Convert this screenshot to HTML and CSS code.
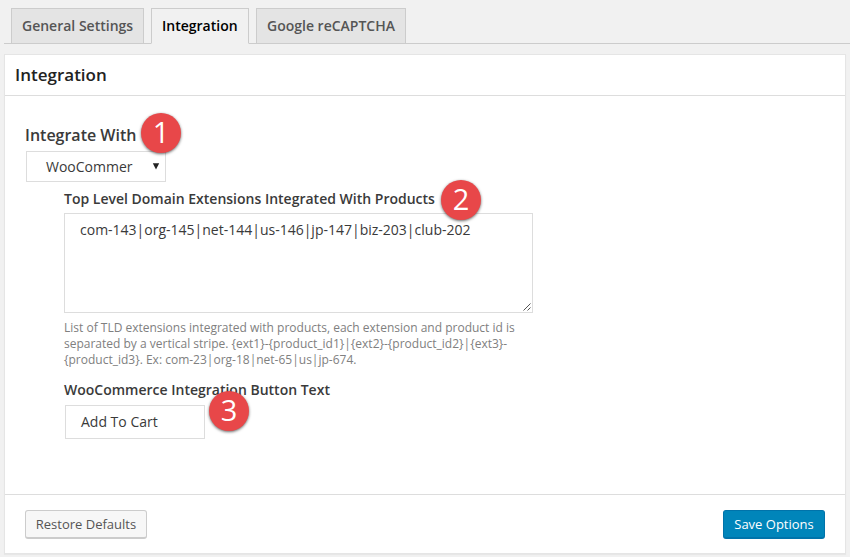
FILE: index.html
```html
<!DOCTYPE html>
<html lang="en">
<head>
<meta charset="utf-8">
<title>Integration</title>
<link rel="stylesheet" href="styles.css">
</head>
<body>
<nav class="tabs">
  <a class="tab t1"><span>General Settings</span></a>
  <a class="tab t2 active"><span>Integration</span></a>
  <a class="tab t3"><span>Google reCAPTCHA</span></a>
</nav>
<main class="panel">
  <h2 class="panel-title">Integration</h2>
  <div class="content">
    <label class="label-main">Integrate With<b class="badge b1">1</b></label>
    <div class="select"><span>WooCommer</span><svg width="8" height="7" viewBox="0 0 8 7"><path d="M.8.3h6.4L4 6.5z" fill="#222"/></svg></div>
    <div class="nested">
      <label class="label">Top Level Domain Extensions Integrated With Products<b class="badge b2">2</b></label>
      <div class="textarea">com-143|org-145|net-144|us-146|jp-147|biz-203|club-202<svg class="grip" width="8" height="8" viewBox="0 0 8 8"><path d="M.5 7.5l7-7M4.5 7.5l3-3" stroke="#555" fill="none"/></svg></div>
      <p class="help">List of TLD extensions integrated with products, each extension and product id is<br>separated by a vertical stripe. {ext1}-{product_id1}|{ext2}-{product_id2}|{ext3}-<br>{product_id3}. Ex: com-23|org-18|net-65|us|jp-674.</p>
      <label class="label label-button">WooCommerce Integration Button Text<b class="badge b3">3</b></label>
      <div class="input">Add To Cart</div>
    </div>
  </div>
  <footer class="footer">
    <button class="btn">Restore Defaults</button>
    <button class="btn primary">Save Options</button>
  </footer>
</main>
</body>
</html>
```
FILE: styles.css
```css
* { box-sizing: border-box; }
body {
  margin: 0;
  height: 557px;
  overflow: hidden;
  background: #f1f1f1;
  color: #3a3a3a;
  font-family: "Open Sans", sans-serif;
  font-size: 14px;
}
.tabs {
  display: flex;
  align-items: flex-end;
  gap: 7px;
  height: 44px;
  margin-left: 4px;
  padding-left: 7px;
  border-bottom: 1px solid #ccc;
}
.tab {
  height: 36px;
  margin-bottom: -1px;
  padding-left: 10px;
  border: 1px solid #ccc;
  background: #e4e4e4;
  color: #555;
  font-size: 14px;
  font-weight: 600;
  line-height: 34px;
  white-space: nowrap;
}
.t1 { width: 133px; }
.t2 { width: 98px; }
.t3 { width: 150px; }
.tab.active { background: #f1f1f1; border-bottom-color: #f1f1f1; color: #000; }
.panel {
  width: 842px;
  height: 500px;
  margin: 10px 0 0 4px;
  border: 1px solid #e5e5e5;
  background: #fff;
  box-shadow: 0 1px 1px rgba(0, 0, 0, .04);
  display: flex;
  flex-direction: column;
}
.panel-title {
  height: 41px;
  margin: 0;
  padding-left: 10px;
  border-bottom: 1px solid #ddd;
  color: #222;
  font-size: 17px;
  font-weight: 600;
  line-height: 40px;
}
.content { flex: 1; padding: 27px 0 0 20px; }
.label-main {
  position: relative;
  display: block;
  width: max-content;
  height: 28px;
  font-size: 16px;
  font-weight: 600;
  line-height: 24px;
}
.select {
  display: flex;
  align-items: center;
  justify-content: space-between;
  width: 140px;
  height: 31px;
  margin-left: 1px;
  padding: 0 5px 0 19px;
  border: 1px solid #ddd;
}
.select svg { margin-top: -1px; }
.nested { padding: 6px 0 0 39px; }
.label {
  position: relative;
  display: block;
  width: max-content;
  height: 25px;
  font-size: 14px;
  font-weight: 600;
  line-height: 22px;
}
.textarea {
  position: relative;
  width: 469px;
  height: 100px;
  padding: 6px 15px;
  border: 1px solid #ddd;
  line-height: 19px;
}
.grip { position: absolute; right: 1px; bottom: 1px; }
.help {
  margin: 7px 0 11px;
  color: #808080;
  font-size: 12px;
  line-height: 16px;
  white-space: nowrap;
}
.label-button { height: 26px; }
.input {
  width: 140px;
  height: 34px;
  margin-left: 1px;
  padding-left: 15px;
  border: 1px solid #ddd;
  line-height: 32px;
}
.badge {
  position: absolute;
  z-index: 1;
  width: 40px;
  height: 40px;
  border-radius: 50%;
  background: #e84749;
  box-shadow: 0 1px 3px rgba(0, 0, 0, .6);
  color: #fff;
  font: 29px/38px "Open Sans", sans-serif;
  text-align: center;
}
.b1 { left: 116px; top: -10px; }
.b2 { left: 377px; top: -8px; }
.b3 { left: 145px; top: 12px; }
.footer {
  display: flex;
  justify-content: space-between;
  height: 59px;
  padding: 15px 20px 0;
  border-top: 1px solid #ddd;
}
.btn {
  width: 122px;
  height: 29px;
  padding: 0;
  border: 1px solid #ccc;
  border-bottom-width: 2px;
  border-radius: 3px;
  background: #f7f7f7;
  color: #555;
  font: 13px/26px "Open Sans", sans-serif;
}
.btn.primary {
  width: 102px;
  border-color: #0073aa;
  background: #0085ba;
  color: #fff;
}
```
